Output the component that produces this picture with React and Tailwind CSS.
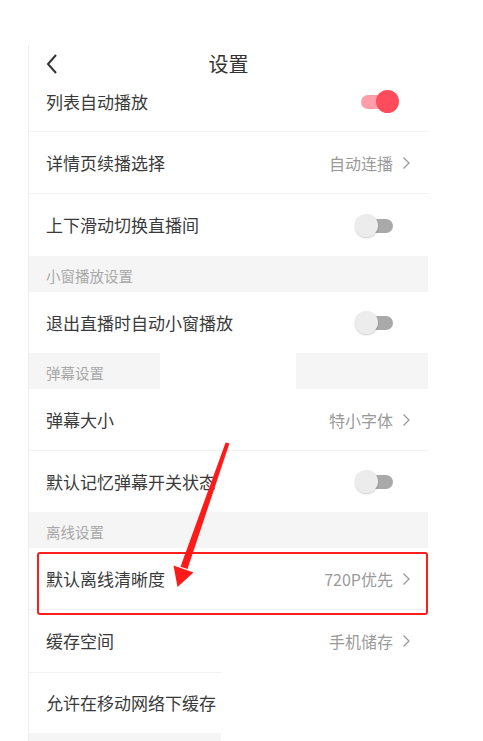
import React from "react";

const FONT = { fontFamily: '"Noto Sans CJK SC", "Noto Sans", sans-serif' };

function Chevron() {
  return (
    <svg width="9" height="14" viewBox="0 0 9 14" className="ml-[9px]">
      <polyline points="1.5,1.5 7,7 1.5,12.5" fill="none" stroke="#9a9a9a" strokeWidth="1.3" />
    </svg>
  );
}

function ToggleOn() {
  return (
    <div className="relative w-[38px] h-[23px] mr-[29px]">
      <div className="absolute left-0 top-[5px] w-[30px] h-[14px] rounded-full bg-[#ff9ea8]" />
      <div className="absolute right-0 top-0 w-[23px] h-[23px] rounded-full bg-[#ff4b5c]" />
    </div>
  );
}

function ToggleOff() {
  return (
    <div className="relative w-[38px] h-[23px] mr-[35px]">
      <div className="absolute right-0 top-[5px] w-[28px] h-[14px] rounded-full bg-[#a9a9a9]" />
      <div className="absolute left-0 top-0 w-[23px] h-[23px] rounded-full bg-[#ececec] shadow-[0_1px_2px_rgba(0,0,0,0.2)]" />
    </div>
  );
}

function Row({ label, value, toggle, border = true, h = "h-[62px]" }) {
  return (
    <div className={`flex items-center justify-between ${h} pl-[17px] ${border ? "border-b border-[#f1f1f1]" : ""}`}>
      <span className="text-[17px] text-[#3a3a3a]">{label}</span>
      {value && (
        <div className="flex items-center pr-[17px]">
          <span className="text-[16px] text-[#9a9a9a]">{value}</span>
          <Chevron />
        </div>
      )}
      {toggle === "on" && <ToggleOn />}
      {toggle === "off" && <ToggleOff />}
    </div>
  );
}

function Section({ title }) {
  return (
    <div className="h-[36px] bg-[#f5f5f5] flex items-center pl-[17px] pt-[4px]">
      <span className="text-[14.5px] text-[#a8a8a8]">{title}</span>
    </div>
  );
}

export default function App() {
  return (
    <div className="relative w-[483px] h-[741px] bg-white overflow-hidden" style={FONT}>
      <div className="pt-[45px] pl-[28px]">
        <div className="w-[400px] border-l border-[#eeeeee]">
          {/* header */}
          <div className="h-[37px] flex items-center relative">
            <svg width="14" height="22" viewBox="0 0 14 22" className="ml-[16px]">
              <polyline points="11,2 3,11 11,20" fill="none" stroke="#333" strokeWidth="2" />
            </svg>
            <span className="absolute left-0 right-0 text-center text-[20px] text-[#333] pointer-events-none">设置</span>
          </div>
          {/* row 1 */}
          <div className="flex items-center justify-between h-[50px] pb-[10px] pl-[17px] border-b border-[#f1f1f1]">
            <span className="text-[17px] text-[#3a3a3a]">列表自动播放</span>
            <ToggleOn />
          </div>
          <Row label="详情页续播选择" value="自动连播" />
          <Row label="上下滑动切换直播间" toggle="off" border={false} />
          <Section title="小窗播放设置" />
          <Row label="退出直播时自动小窗播放" toggle="off" border={false} h="h-[61px]" />
          <div className="h-[36px] flex">
            <div className="w-[131px] bg-[#f5f5f5] flex items-center pl-[17px] pt-[4px]">
              <span className="text-[14.5px] text-[#a8a8a8]">弹幕设置</span>
            </div>
            <div className="w-[136px] bg-white" />
            <div className="flex-1 bg-[#f5f5f5]" />
          </div>
          <Row label="弹幕大小" value="特小字体" />
          <Row label="默认记忆弹幕开关状态" toggle="off" border={false} h="h-[61px]" />
          <Section title="离线设置" />
          <Row label="默认离线清晰度" value="720P优先" />
          <Row label="缓存空间" value="手机储存" border={false} />
          <div className="w-[192px]">
            <div className="border-t border-[#f1f1f1] h-[61px] flex items-center pl-[17px]">
              <span className="text-[17px] text-[#3a3a3a] whitespace-nowrap">允许在移动网络下缓存</span>
            </div>
            <div className="h-[20px] bg-[#f5f5f5]" />
          </div>
        </div>
      </div>

      {/* red highlight box */}
      <div className="absolute left-[37px] top-[552px] w-[391px] h-[63px] border-[2.5px] border-[#ff1e1e] rounded-[3px]" />

      {/* arrow */}
      <svg className="absolute left-0 top-0" width="483" height="741" viewBox="0 0 483 741">
        <polygon points="225.6,442.5 229.4,443.5 187.5,569 180.5,566.8" fill="#ff1a1a" />
        <polygon points="173.5,565.5 193.5,572.5 177.5,587" fill="#ff1a1a" />
      </svg>
    </div>
  );
}
